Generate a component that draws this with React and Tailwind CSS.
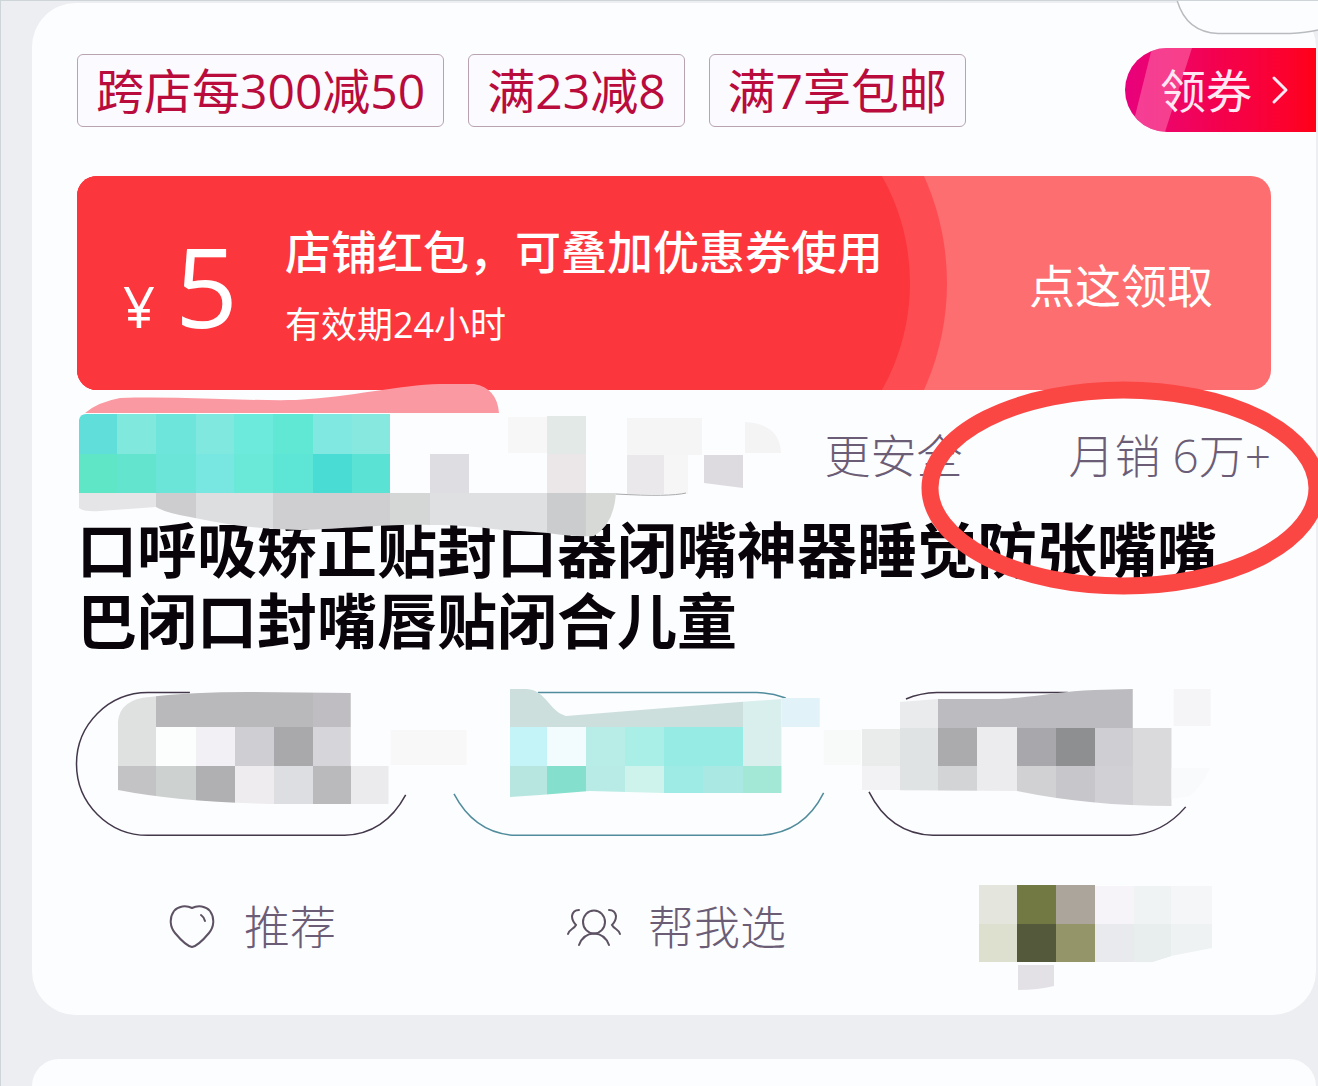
import { ChevronRight } from 'lucide-react';

const tags = ['跨店每300减50', '满23减8', '满7享包邮'];

// [x, y, width, height, fill]
const brandCells = [
  [79, 414, 38, 40, '#60ded9'],
  [117, 414, 39, 40, '#80e8dd'],
  [156, 414, 40, 40, '#6de5da'],
  [196, 414, 38, 40, '#80e8df'],
  [234, 414, 39, 40, '#6ceadb'],
  [273, 414, 40, 40, '#60e8d5'],
  [313, 414, 39, 40, '#80e8e0'],
  [352, 414, 38, 40, '#86e8df'],
  [79, 454, 38, 39, '#5fe6c6'],
  [117, 454, 39, 39, '#62e4ce'],
  [156, 454, 40, 39, '#6be5d8'],
  [196, 454, 38, 39, '#78e7e1'],
  [234, 454, 39, 39, '#6ae8d8'],
  [273, 454, 40, 39, '#5de6d5'],
  [313, 454, 39, 39, '#48dcd4'],
  [352, 454, 38, 39, '#5ae3d5'],
];

const shadowCells = [
  [79, 493, 77, 50, '#e5e5e7'],
  [156, 493, 40, 50, '#cdcdcf'],
  [196, 493, 77, 50, '#dddedf'],
  [273, 493, 117, 50, '#cfcfd1'],
  [390, 493, 40, 50, '#d5d7d7'],
  [430, 493, 117, 50, '#dfe0e2'],
  [547, 493, 39, 50, '#cacccd'],
  [586, 493, 31, 50, '#d6d9d6'],
];

const lightCells = [
  [430, 454, 39, 39, '#dedde1'],
  [508, 417, 39, 36, '#f7f7f7'],
  [547, 416, 39, 38, '#e3e9e7'],
  [547, 454, 39, 39, '#ebe7e9'],
  [627, 418, 75, 37, '#f5f5f6'],
  [664, 455, 24, 39, '#f6f6f6'],
  [627, 455, 37, 39, '#eae8eb'],
];

const firstCells = [
  [118, 690, 38, 76, '#dfe0e0'],
  [156, 690, 157, 37, '#b9b8bb'],
  [313, 690, 38, 37, '#bfbdc1'],
  [156, 727, 40, 39, '#fbfefd'],
  [196, 727, 39, 39, '#f2f0f4'],
  [235, 727, 39, 39, '#cfced2'],
  [274, 727, 39, 39, '#a9a8ab'],
  [313, 727, 38, 39, '#d6d5d9'],
  [118, 766, 38, 40, '#c3c2c5'],
  [156, 766, 40, 40, '#cdd1cf'],
  [196, 766, 39, 40, '#b0afb2'],
  [235, 766, 39, 40, '#efecf0'],
  [274, 766, 39, 40, '#dddee1'],
  [313, 766, 38, 40, '#bababc'],
  [351, 766, 38, 40, '#ebebed'],
];

const secondCells = [
  [510, 685, 233, 42, '#cddfdd'],
  [743, 685, 39, 81, '#d9efed'],
  [510, 727, 37, 39, '#c5f4f8'],
  [547, 727, 39, 39, '#f2fbfd'],
  [586, 727, 39, 39, '#b8ece6'],
  [625, 727, 39, 39, '#a9eee7'],
  [664, 727, 79, 39, '#97ebe5'],
  [510, 766, 37, 34, '#b7e6e0'],
  [547, 766, 39, 34, '#84dfcd'],
  [586, 766, 39, 34, '#b8ebe5'],
  [625, 766, 39, 34, '#cdf3ec'],
  [664, 766, 39, 34, '#9debe4'],
  [703, 766, 40, 34, '#a9e8e3'],
  [743, 766, 39, 34, '#a3e8d7'],
];

const thirdCells = [
  [862, 729, 38, 37, '#eaebeb'],
  [862, 766, 38, 24, '#f2f1f4'],
  [900, 690, 38, 38, '#eaebed'],
  [900, 728, 38, 63, '#e0e3e4'],
  [938, 685, 195, 43, '#bcbbbf'],
  [938, 728, 39, 38, '#abaaad'],
  [977, 727, 40, 64, '#ecebee'],
  [1017, 728, 39, 38, '#a8a7ab'],
  [1056, 728, 39, 38, '#8e8f90'],
  [1095, 728, 38, 38, '#cfced3'],
  [938, 766, 39, 25, '#d3d4d6'],
  [1017, 766, 39, 40, '#d1d1d4'],
  [1056, 766, 39, 40, '#c7c6ca'],
  [1095, 766, 38, 40, '#d1d0d4'],
  [1133, 728, 39, 80, '#dadadd'],
];

const avatarCells = [
  [979, 885, 38, 39, '#e4e5dc'],
  [1017, 885, 39, 39, '#727943'],
  [1056, 885, 39, 39, '#aba59c'],
  [979, 924, 38, 38, '#dddfcf'],
  [1017, 924, 39, 38, '#54593b'],
  [1056, 924, 39, 38, '#94966a'],
  [1095, 886, 39, 38, '#f6f4f8'],
  [1134, 886, 37, 38, '#f0f3f3'],
  [1171, 886, 41, 38, '#f5f6f7'],
];

const Cells = ({ cells, clip }) => (
  <g clipPath={clip} shapeRendering="crispEdges">
    {cells.map(([x, y, w, h, fill]) => (
      <rect key={`${x}-${y}`} x={x} y={y} width={w} height={h} fill={fill} />
    ))}
  </g>
);

const Tag = ({ children }) => (
  <li className="rounded-md border border-[#b9a3b0] bg-[#fafaff] px-[18px] text-5xl leading-[71px] text-[#b90b3c]">
    {children}
  </li>
);

const Coupon = () => (
  <div className="relative mr-[45px] ml-[45px] flex h-[214px] items-center overflow-hidden rounded-[20px] bg-[#fd6e70] pt-1 pr-[58px] pl-[46px] text-white">
    <svg className="absolute top-0 left-0" width="880" height="214" viewBox="77 176 880 214" aria-hidden="true">
      <rect x="77" y="176" width="640" height="214" fill="#fc363d" />
      <circle cx="687" cy="283" r="260" fill="#fd4d52" />
      <circle cx="692" cy="283" r="218" fill="#fc363d" />
      <rect x="77" y="176" width="610" height="214" fill="#fc363d" />
    </svg>
    <div className="relative flex items-baseline gap-5 leading-none">
      <span className="text-[56px]">¥</span>
      <span className="text-[110px]">5</span>
    </div>
    <div className="relative ml-[47px] grow">
      <p className="text-[46px] leading-[60px] font-medium">店铺红包，可叠加优惠券使用</p>
      <p className="mt-5 text-4xl leading-[48px]">有效期24小时</p>
    </div>
    <button type="button" className="relative shrink-0 text-[46px] leading-[60px]">
      点这领取
    </button>
  </div>
);

const Info = () => (
  <div className="relative z-10 mt-[41px] mr-[45px] ml-[45px] flex justify-end gap-[106px] text-[46px] leading-[48px] font-light text-[#6c5d76]">
    <svg
      className="absolute -top-[51px] left-0"
      width="710"
      height="160"
      viewBox="77 380 710 160"
      aria-hidden="true"
    >
      <clipPath id="brand-clip">
        <path d="M79 493V420Q80 414 86 414H390V493Z" />
      </clipPath>
      <clipPath id="shadow-clip">
        <path d="M79 493V508Q84 512 100 511L156 507Q166 513 190 517C220 523 250 529 300 530C350 529 380 524 430 525C470 524 500 531 520 531L548 533Q575 537 594 536Q614 524 616 493Z" />
      </clipPath>
      <path
        d="M85 413Q98 402 120 398C180 396 240 401 296 400C350 397 400 385 440 384H474Q497 388 499 413Z"
        fill="#fb99a2"
      />
      <Cells cells={brandCells} clip="url(#brand-clip)" />
      <Cells cells={lightCells} />
      <Cells cells={shadowCells} clip="url(#shadow-clip)" />
      <path d="M704 455H743V488L704 483Z" fill="#dddbdf" />
      <path d="M745 422Q780 424 781 453H745Z" fill="#f4f4f5" />
      <path d="M616 494Q670 497 686 493" fill="none" stroke="#a9a9ab" />
    </svg>
    <span>更安全</span>
    <span>月销 6万+</span>
    <svg
      className="absolute -top-[50px] -right-[55px]"
      width="405"
      height="214"
      viewBox="921 381 405 214"
      aria-hidden="true"
    >
      <ellipse cx="1123.500" cy="488" rx="193.500" ry="98" fill="none" stroke="#fb4744" strokeWidth="17" />
    </svg>
  </div>
);

const Options = () => (
  <div className="mt-[35px] mr-[115px] ml-[45px] grid grid-cols-[339fr_391fr_339fr] gap-7">
    <button type="button" aria-label="选项一">
      <svg className="block w-full overflow-visible" viewBox="77 692 339 143" fill="none" aria-hidden="true">
        <clipPath id="first-clip">
          <path d="M118 790V722Q120 699 150 697Q190 692 250 692L351 693V766H389V804H270Q180 802 118 790Z" />
        </clipPath>
        <path
          d="M190 692.500H148A71.500 71.500 0 0 0 148 835.500H345Q385 834 406 795"
          stroke="#43374a"
          strokeWidth="1.500"
        />
        <Cells cells={firstCells} clip="url(#first-clip)" />
        <rect x="391" y="730" width="76" height="35" fill="#f8f8f9" />
      </svg>
    </button>
    <button type="button" aria-label="选项二">
      <svg className="block w-full overflow-visible" viewBox="444 692 391 143" fill="none" aria-hidden="true">
        <clipPath id="second-clip">
          <path d="M510 689H527C546 690 549 711 566 716L740 702L782 699V793H664L590 791L540 795L510 797Z" />
        </clipPath>
        <path d="M538 692.500H757Q772 693 786 698" stroke="#518c9c" strokeWidth="1.500" />
        <path d="M454 794Q475 834 516 835.500H757Q803 835 824 793" stroke="#518c9c" strokeWidth="1.500" />
        <Cells cells={secondCells} clip="url(#second-clip)" />
        <rect x="782" y="698" width="38" height="29" fill="#e1f2f8" />
        <rect x="824" y="730" width="37" height="35" fill="#f8f9f9" />
      </svg>
    </button>
    <button type="button" aria-label="选项三">
      <svg className="block w-full overflow-visible" viewBox="862 692 339 143" fill="none" aria-hidden="true">
        <clipPath id="third-clip">
          <path d="M862 729H900V702L938 699H1000C1040 697 1060 691 1095 690L1133 689V728H1172V806Q1090 806 1017 791L862 790Z" />
        </clipPath>
        <path d="M906 699Q920 693 937 692.500H1068" stroke="#43374a" strokeWidth="1.500" />
        <path d="M869 792Q890 834 933 835.500H1130Q1163 834 1186 807" stroke="#43374a" strokeWidth="1.500" />
        <Cells cells={thirdCells} clip="url(#third-clip)" />
        <rect x="1174" y="689" width="37" height="37" fill="#f5f5f8" />
        <path d="M1172 768H1210Q1204 784 1190 796L1172 799Z" fill="#f9fafb" />
      </svg>
    </button>
  </div>
);

const HeartIcon = () => (
  <svg
    width="46"
    height="44"
    viewBox="169 904 46 44"
    fill="none"
    stroke="#5d5263"
    strokeWidth="2"
    strokeLinecap="round"
    aria-hidden="true"
  >
    <path d="M192 907C186 904 178 905 174 910C169 917 170 926 175 932C180 938 187 945 192 946C197 945 204 938 209 932C214 926 215 917 210 910C206 905 198 904 192 907Z" />
    <path d="M201 914Q204 916 205 920" />
  </svg>
);

const GroupIcon = () => (
  <svg
    width="54"
    height="40"
    viewBox="567 905 54 40"
    fill="none"
    stroke="#5d5263"
    strokeWidth="2"
    strokeLinecap="round"
    aria-hidden="true"
  >
    <ellipse cx="594" cy="920" rx="11" ry="11.500" />
    <path d="M579 943Q583 932 594 931.500Q605 932 609 943" />
    <path d="M579 908Q573 908 572 914Q572 919 576 923Q575 925 572 927Q569 929 568 932" />
    <path d="M609 908Q615 908 616 914Q616 919 612 923Q613 925 616 927Q619 929 620 932" />
  </svg>
);

const Actions = () => (
  <div className="mt-11 mr-[45px] ml-[45px] grid h-[106px] grid-cols-3 text-[46px] font-light text-[#6c5d76]">
    <button type="button" className="flex h-24 items-center gap-[29px] pl-[92px]">
      <HeartIcon />
      推荐
    </button>
    <button type="button" className="flex h-24 items-center gap-[27px] pl-[92px]">
      <GroupIcon />
      帮我选
    </button>
    <div className="pt-1.5 pl-[105px]">
      <svg width="234" height="106" viewBox="978 885 234 106" aria-hidden="true">
        <Cells cells={avatarCells} />
        <path d="M1095 924H1171V956L1152 962H1095Z" fill="#e9eaee" />
        <path d="M1134 924H1171V956L1152 962H1134Z" fill="#e8eded" />
        <path d="M1171 924H1212V948L1171 956Z" fill="#eef2f2" />
        <path d="M1018 965H1054V986Q1038 990 1018 990Z" fill="#e3e1e6" />
      </svg>
    </div>
  </div>
);

const App = () => (
  <div className="relative flex min-h-screen flex-col overflow-hidden border-t border-l border-[#cdd5d8] bg-[#edeef1] font-['Open_Sans','Noto_Sans_CJK_SC',sans-serif]">
    <main className="relative mt-0.5 mr-0.5 ml-[31px] rounded-[44px] bg-[#fcfdff] pt-[45px] pb-[30px]">
      <svg
        className="absolute -top-[3px] -right-0.5"
        width="142"
        height="36"
        viewBox="1176 0 142 36"
        fill="none"
        aria-hidden="true"
      >
        <path d="M1177 0Q1186 32 1218 33.500H1290Q1306 33 1318 30V0Z" fill="#fcfdff" />
        <path d="M1177 0Q1186 32 1218 33.500H1290Q1306 33 1318 30" stroke="#b9bcbf" strokeWidth="1.500" />
      </svg>

      <div className="flex items-center justify-between pl-[45px]">
        <ul className="flex gap-6">
          {tags.map((tag) => (
            <Tag key={tag}>{tag}</Tag>
          ))}
        </ul>
        <button
          type="button"
          className="relative flex h-[84px] items-center gap-1 overflow-hidden rounded-l-full bg-linear-to-r from-[#e8007c] via-[#f4004c] to-[#ff0014] pr-3 pl-[35px] text-[46px] text-[#ffe8f4]"
        >
          <svg className="absolute top-0 left-0" width="70" height="84" viewBox="0 0 70 84" aria-hidden="true">
            <path d="M27 0H67L40 84H6Z" fill="#ff7ab4" fillOpacity="0.5" />
          </svg>
          <span className="relative">领券</span>
          <ChevronRight className="relative" size={48} strokeWidth={1.5} aria-hidden="true" />
        </button>
      </div>

      <div className="mt-11">
        <Coupon />
        <Info />
      </div>

      <h1 className="mt-9 mr-[45px] ml-[45px] text-6xl leading-[71px] font-bold text-[#08040a]">
        口呼吸矫正贴封口器闭嘴神器睡觉防张嘴嘴巴闭口封嘴唇贴闭合儿童
      </h1>

      <Options />
      <Actions />
    </main>

    <section className="mt-11 mr-0.5 ml-[31px] grow rounded-t-[44px] bg-[#fcfdff]" />
  </div>
);

export default App;
